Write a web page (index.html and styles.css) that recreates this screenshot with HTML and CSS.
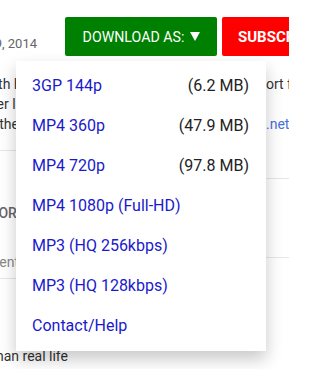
FILE: index.html
```html
<!DOCTYPE html>
<html>
<head>
<meta charset="utf-8">
<link rel="stylesheet" href="styles.css">
</head>
<body>
<div class="page">
  <div class="header">
    <div class="date"><span>Published on Jan 9, 2014</span></div>
    <div class="dropdown">
      <button class="btn-dl">DOWNLOAD AS: <svg class="tri" width="10" height="9" viewBox="0 0 10 9"><polygon points="0,0 10,0 5,9" fill="#fff"/></svg></button>
      <div class="menu">
        <a class="item"><span>3GP 144p</span><span class="size">(6.2 MB)</span></a>
        <a class="item"><span>MP4 360p</span><span class="size">(47.9 MB)</span></a>
        <a class="item"><span>MP4 720p</span><span class="size">(97.8 MB)</span></a>
        <a class="item"><span>MP4 1080p (Full-HD)</span></a>
        <a class="item"><span>MP3 (HQ 256kbps)</span></a>
        <a class="item"><span>MP3 (HQ 128kbps)</span></a>
        <a class="item"><span>Contact/Help</span></a>
      </div>
    </div>
    <button class="btn-sub">SUBSCRIBE 1.2M</button>
  </div>
  <div class="content">
    <div class="lcol">
      <div class="line l1"><span>Watch with Full</span></div>
      <div class="line"><span>whoever li</span></div>
      <div class="line"><span>See the </span></div>
      <div class="rule rule-l1"></div>
      <div class="line caps"><span>SORT</span></div>
      <div class="line muted"><span>Add a public comment</span></div>
      <div class="rule rule-l2"></div>
    </div>
    <div class="mid"></div>
    <div class="rcol">
      <div class="rline">ort for</div>
      <div class="rline">&nbsp;</div>
      <div class="rline link">.net</div>
      <div class="rule rule-r1"></div>
      <div class="rule rule-r2"></div>
    </div>
  </div>
  <div class="last">
    <div class="lastline"><span>This looks better than real life</span></div>
  </div>
</div>
</body>
</html>
```
FILE: styles.css
```css
html, body {
  margin: 0;
  padding: 0;
  background: #fff;
}
.page {
  position: relative;
  width: 289px;
  height: 369px;
  overflow: hidden;
  display: flex;
  flex-direction: column;
  font-family: Roboto, "Liberation Sans", sans-serif;
  font-size: 14px;
  color: #333;
}
.header {
  display: flex;
  align-items: flex-end;
  padding-top: 17px;
  height: 39px;
  flex-shrink: 0;
}
.date {
  width: 37px;
  margin-right: 28px;
  display: flex;
  justify-content: flex-end;
  white-space: nowrap;
  color: #666;
  font-size: 13px;
  line-height: 20px;
  margin-bottom: 2px;
  flex-shrink: 0;
}
.date span { flex-shrink: 0; }
.dropdown {
  position: relative;
  flex-shrink: 0;
}
.btn-dl {
  display: flex;
  align-items: center;
  justify-content: center;
  gap: 6px;
  width: 152px;
  height: 39px;
  border: 0;
  border-radius: 2px;
  background: #008000;
  color: #fff;
  font-family: Roboto, "Liberation Sans", sans-serif;
  font-size: 14.2px;
  padding: 0 0 0 1px;
  margin: 0;
}
.tri { display: block; }
.btn-sub {
  flex-shrink: 0;
  width: 130px;
  height: 39px;
  margin: 0 0 0 5px;
  border: 0;
  border-radius: 2px;
  background: #f00;
  color: #fff;
  font-family: Roboto, "Liberation Sans", sans-serif;
  font-weight: 700;
  font-size: 15px;
  text-align: left;
  padding: 0 0 0 16px;
  white-space: nowrap;
}
.menu {
  position: absolute;
  top: 44px;
  left: -49px;
  width: 250px;
  padding: 5px 0;
  background: #fff;
  box-shadow: 0 8px 16px 0 rgba(0, 0, 0, 0.22);
  z-index: 10;
}
.item {
  display: flex;
  justify-content: space-between;
  height: 40px;
  box-sizing: border-box;
  padding: 12px 17px 12px 16px;
  font-size: 16px;
  line-height: 16px;
  color: #1a1acc;
  white-space: nowrap;
}
.size { color: #222; }
.content {
  display: grid;
  grid-template-columns: 19px 1fr 24px;
  padding-top: 18px;
  flex-shrink: 0;
}
.lcol, .rcol {
  display: flex;
  flex-direction: column;
}
.line {
  display: flex;
  justify-content: flex-end;
  white-space: nowrap;
  line-height: 20px;
  height: 20px;
}
.line span { flex-shrink: 0; }
.l1 span { margin-right: -17px; }
.caps {
  margin-top: 52px;
  color: #666;
  font-weight: 500;
  text-transform: uppercase;
}
.caps span { margin-right: -6px; }
.muted {
  margin-top: 29px;
  color: #888;
}
.rule {
  height: 0;
  border-top: 1px solid #e6e6e6;
}
.rule-l1 { margin-top: 16px; margin-right: -40px; }
.rule-l2 { margin-top: 6px; margin-right: -40px; }
.rcol { padding-left: 1px; }
.rline {
  white-space: nowrap;
  line-height: 20px;
  height: 20px;
}
.link { color: #4a6fd8; }
.rule-r1 { margin-top: 44px; margin-left: -30px; }
.rule-r2 { margin-top: 78px; margin-left: -30px; }
.last {
  display: flex;
  padding-top: 67px;
  flex-shrink: 0;
}
.lastline {
  width: 68px;
  display: flex;
  justify-content: flex-end;
  white-space: nowrap;
  line-height: 20px;
}
.lastline span { flex-shrink: 0; }
```
